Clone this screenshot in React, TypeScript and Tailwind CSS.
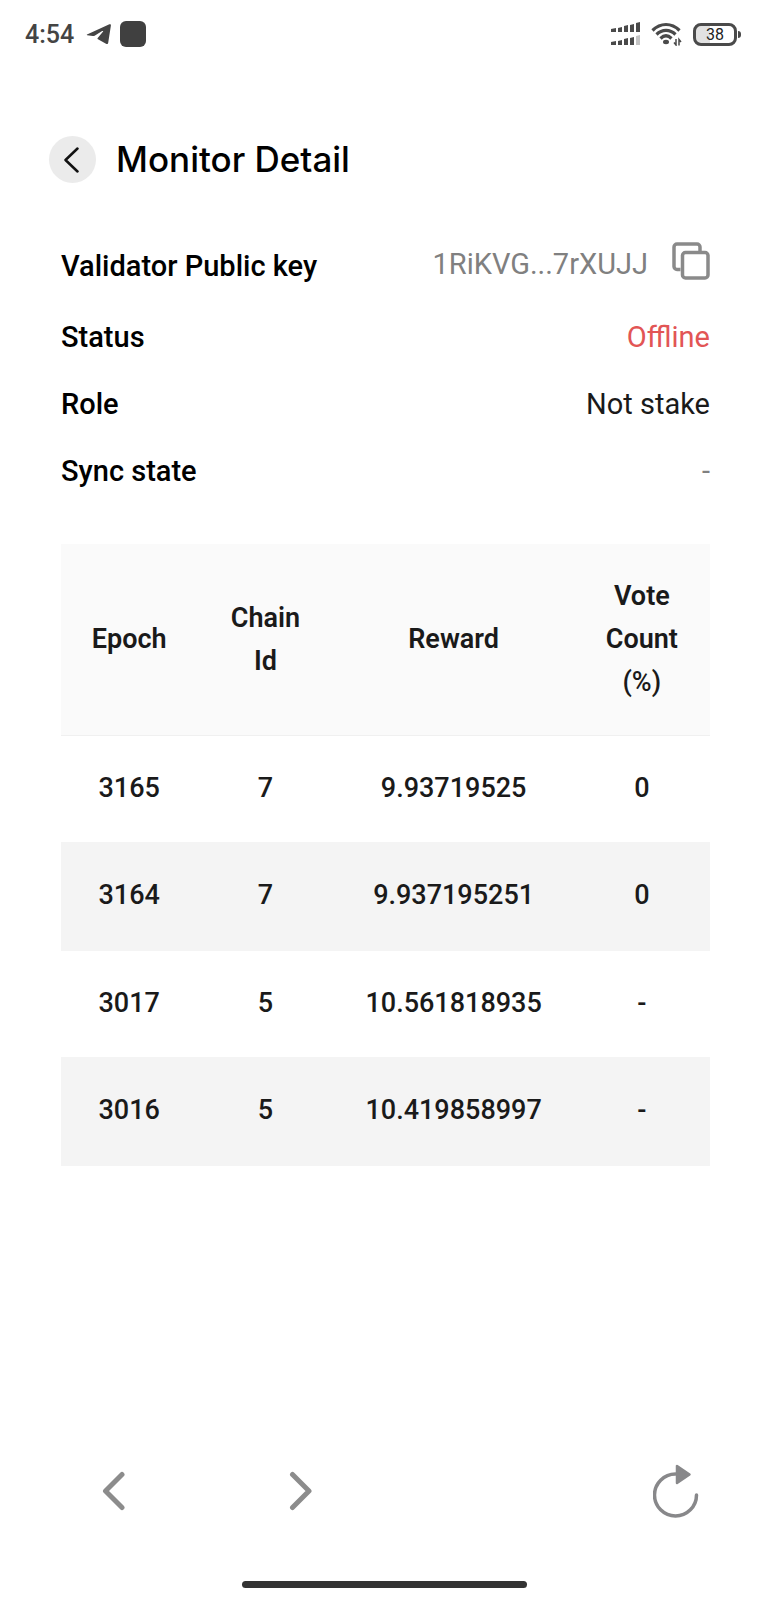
import { Fragment } from 'react';
import type { ReactNode } from 'react';

type Reward = { epoch: number; chainId: number; reward: string; votes: string };

const rewards: Reward[] = [
  { epoch: 3165, chainId: 7, reward: '9.93719525', votes: '0' },
  { epoch: 3164, chainId: 7, reward: '9.937195251', votes: '0' },
  { epoch: 3017, chainId: 5, reward: '10.561818935', votes: '-' },
  { epoch: 3016, chainId: 5, reward: '10.419858997', votes: '-' },
];

function SignalIcon() {
  // Two SIM cards stacked, the second one is missing its last bar.
  const heights = [4, 5, 7, 8, 10];
  return (
    <svg width="29" height="24" viewBox="0 0 29 24" fill="#4a4a4a" aria-hidden="true">
      {heights.map((h, i) => {
        const x = i === 0 ? 0 : i * 6 + 1;
        const w = i === 0 ? 5 : 4;
        return (
          <Fragment key={h}>
            <path d={`M${x} ${11 - h}l${w}-1v${h}h-${w}z`} />
            <path d={`M${x} ${24 - h}l${w}-1v${h}h-${w}z`} fill={i === 4 ? '#c4c4c4' : undefined} />
          </Fragment>
        );
      })}
    </svg>
  );
}

function WifiIcon() {
  return (
    <svg width="31" height="24" viewBox="0 0 31 24" fill="none" aria-hidden="true">
      <g stroke="#4a4a4a" strokeWidth="3.2">
        <path d="M1.5 8.5C9.5 .5 20.5 .5 28.5 8.5" />
        <path d="M5.5 12.5C11 7 19 7 24.5 12.5" />
        <path d="M9.5 16.5C13 13 17 13 20.5 16.5" />
      </g>
      <ellipse cx="15" cy="20" rx="3" ry="2.2" fill="#4a4a4a" />
      <path d="M25 17v6l-2-2.5M28 23.5v-6l2 2.5" stroke="#4a4a4a" strokeWidth="1.5" />
    </svg>
  );
}

function StatusBar() {
  return (
    <div className="flex h-[68px] items-center pl-[25px] pr-7 text-[#444]">
      <span className="pt-px text-[25px] font-medium">4:54</span>
      <svg className="ml-3" width="26" height="22" viewBox="0 0 26 22" fill="#444" aria-hidden="true">
        <path d="M1 11.5 23.4 1.3c1-.4 1.6.1 1.5 1.2L22.2 19.7c-.2 1.3-1 1.7-2.2 1.1l-8-4.5c-.7-.4-.7-1-.1-1.6l5-6c.6-.7.1-1.1-.7-.6L8.6 12.7c-.6.4-1.2.5-1.9.3L1.2 12.2c-.5-.1-.6-.5-.2-.7z" />
      </svg>
      <span className="ml-2 size-[26px] rounded-md bg-[#404040]" />
      <div className="ml-auto flex items-center gap-[11px]">
        <SignalIcon />
        <WifiIcon />
        <div className="flex items-center gap-px">
          <span className="flex h-[23px] w-[44px] items-center justify-center rounded-lg border-[3px] border-[#4a4a4a] bg-linear-to-r from-[#e2e2e2] from-38% to-white to-38% pt-px text-base leading-4 text-[#222]">
            38
          </span>
          <span className="h-[7px] w-[3px] rounded-r-sm bg-[#4a4a4a]" />
        </div>
      </div>
    </div>
  );
}

function DetailRow({ label, children }: { label: string; children: ReactNode }) {
  return (
    <div className="flex h-[67px] items-center justify-between">
      <dt className="font-medium text-black">{label}</dt>
      <dd className="flex items-center">{children}</dd>
    </div>
  );
}

export default function App() {
  return (
    <div className="flex min-h-screen flex-col bg-white font-['Roboto',sans-serif] text-[29px] text-[#1a1a1a]">
      <StatusBar />

      <header className="flex items-center gap-5 px-[49px] pt-[68px]">
        <button type="button" aria-label="Back" className="flex size-[47px] items-center justify-center rounded-full bg-[#ebebeb]">
          <svg width="18" height="26" viewBox="0 0 18 26" fill="none" stroke="#111" strokeWidth="2.5" strokeLinecap="round" strokeLinejoin="round" aria-hidden="true">
            <path d="M13.5 1.5 1.5 13l12 11.5" />
          </svg>
        </button>
        <h1 className="font-['Inter',sans-serif] text-[35px] leading-[47px] font-medium text-black">Monitor Detail</h1>
      </header>

      <main className="pl-[61px] pr-[59px] pt-[50px]">
        <dl>
          <div className="pb-1">
            <DetailRow label="Validator Public key">
              <span className="pb-1 text-[#808080]">1RiKVG...7rXUJJ</span>
              <button type="button" aria-label="Copy public key" className="ml-6 pb-3">
                <svg width="38" height="38" viewBox="0 0 38 38" fill="none" stroke="#8a8a8a" strokeWidth="3.5" strokeLinejoin="round" aria-hidden="true">
                  <path d="M8.5 27.5H5a3 3 0 0 1-3-3V5a3 3 0 0 1 3-3h20a3 3 0 0 1 3 3v4" />
                  <rect x="10.5" y="10.5" width="25.5" height="25.5" rx="3" />
                </svg>
              </button>
            </DetailRow>
          </div>
          <DetailRow label="Status">
            <span className="text-[#e25555]">Offline</span>
          </DetailRow>
          <DetailRow label="Role">Not stake</DetailRow>
          <DetailRow label="Sync state">
            <span className="text-[#808080]">-</span>
          </DetailRow>
        </dl>

        <table className="mt-[39px] w-full table-fixed border-collapse text-center text-[27px] leading-[43px]">
          <colgroup>
            <col className="w-[21%]" />
            <col className="w-[21%]" />
            <col className="w-[37%]" />
            <col className="w-[21%]" />
          </colgroup>
          <thead>
            <tr className="border-b border-[#f0f0f0] bg-[#fafafa]">
              <th className="px-6 py-[31px] font-semibold">Epoch</th>
              <th className="px-6 py-[31px] font-semibold">Chain Id</th>
              <th className="px-6 py-[31px] font-semibold">Reward</th>
              <th className="px-6 py-[31px] font-semibold">
                Vote Count <span className="font-medium">(%)</span>
              </th>
            </tr>
          </thead>
          <tbody className="font-medium">
            {rewards.map((row) => (
              <tr key={row.epoch} className="border-[#f4f4f4] odd:border-b even:border-b-2 even:bg-[#f4f4f4]">
                <td className="pt-[31px] pb-8">{row.epoch}</td>
                <td className="pt-[31px] pb-8">{row.chainId}</td>
                <td className="pt-[31px] pb-8">{row.reward}</td>
                <td className="pt-[31px] pb-8">{row.votes}</td>
              </tr>
            ))}
          </tbody>
        </table>
      </main>

      <footer className="mt-auto pt-16">
        <nav className="flex items-center pl-[102px] pr-[70px]" aria-label="Browser">
          <button type="button" aria-label="Previous page">
            <svg width="24" height="40" viewBox="0 0 24 40" fill="none" stroke="#8c8c8c" strokeWidth="5" strokeLinecap="round" strokeLinejoin="round" aria-hidden="true">
              <path d="M20 3.5 3.5 20 20 36.5" />
            </svg>
          </button>
          <button type="button" aria-label="Next page" className="ml-[163px]">
            <svg width="24" height="40" viewBox="0 0 24 40" fill="none" stroke="#8c8c8c" strokeWidth="5" strokeLinecap="round" strokeLinejoin="round" aria-hidden="true">
              <path d="M3.5 3.5 20 20 3.5 36.5" />
            </svg>
          </button>
          <button type="button" aria-label="Reload" className="ml-auto">
            <svg width="46" height="56" viewBox="0 0 46 56" fill="none" aria-hidden="true">
              <path d="M43.5 32A21 21 0 1 1 22.5 11" stroke="#88888a" strokeWidth="3.5" strokeLinecap="round" />
              <path d="M24 3v17l12.5-8.5z" fill="#88888a" stroke="#88888a" strokeWidth="2.5" strokeLinejoin="round" />
            </svg>
          </button>
        </nav>
        <div className="mx-auto mt-[62px] mb-3 h-[7px] w-[37%] rounded-full bg-[#333]" />
      </footer>
    </div>
  );
}
